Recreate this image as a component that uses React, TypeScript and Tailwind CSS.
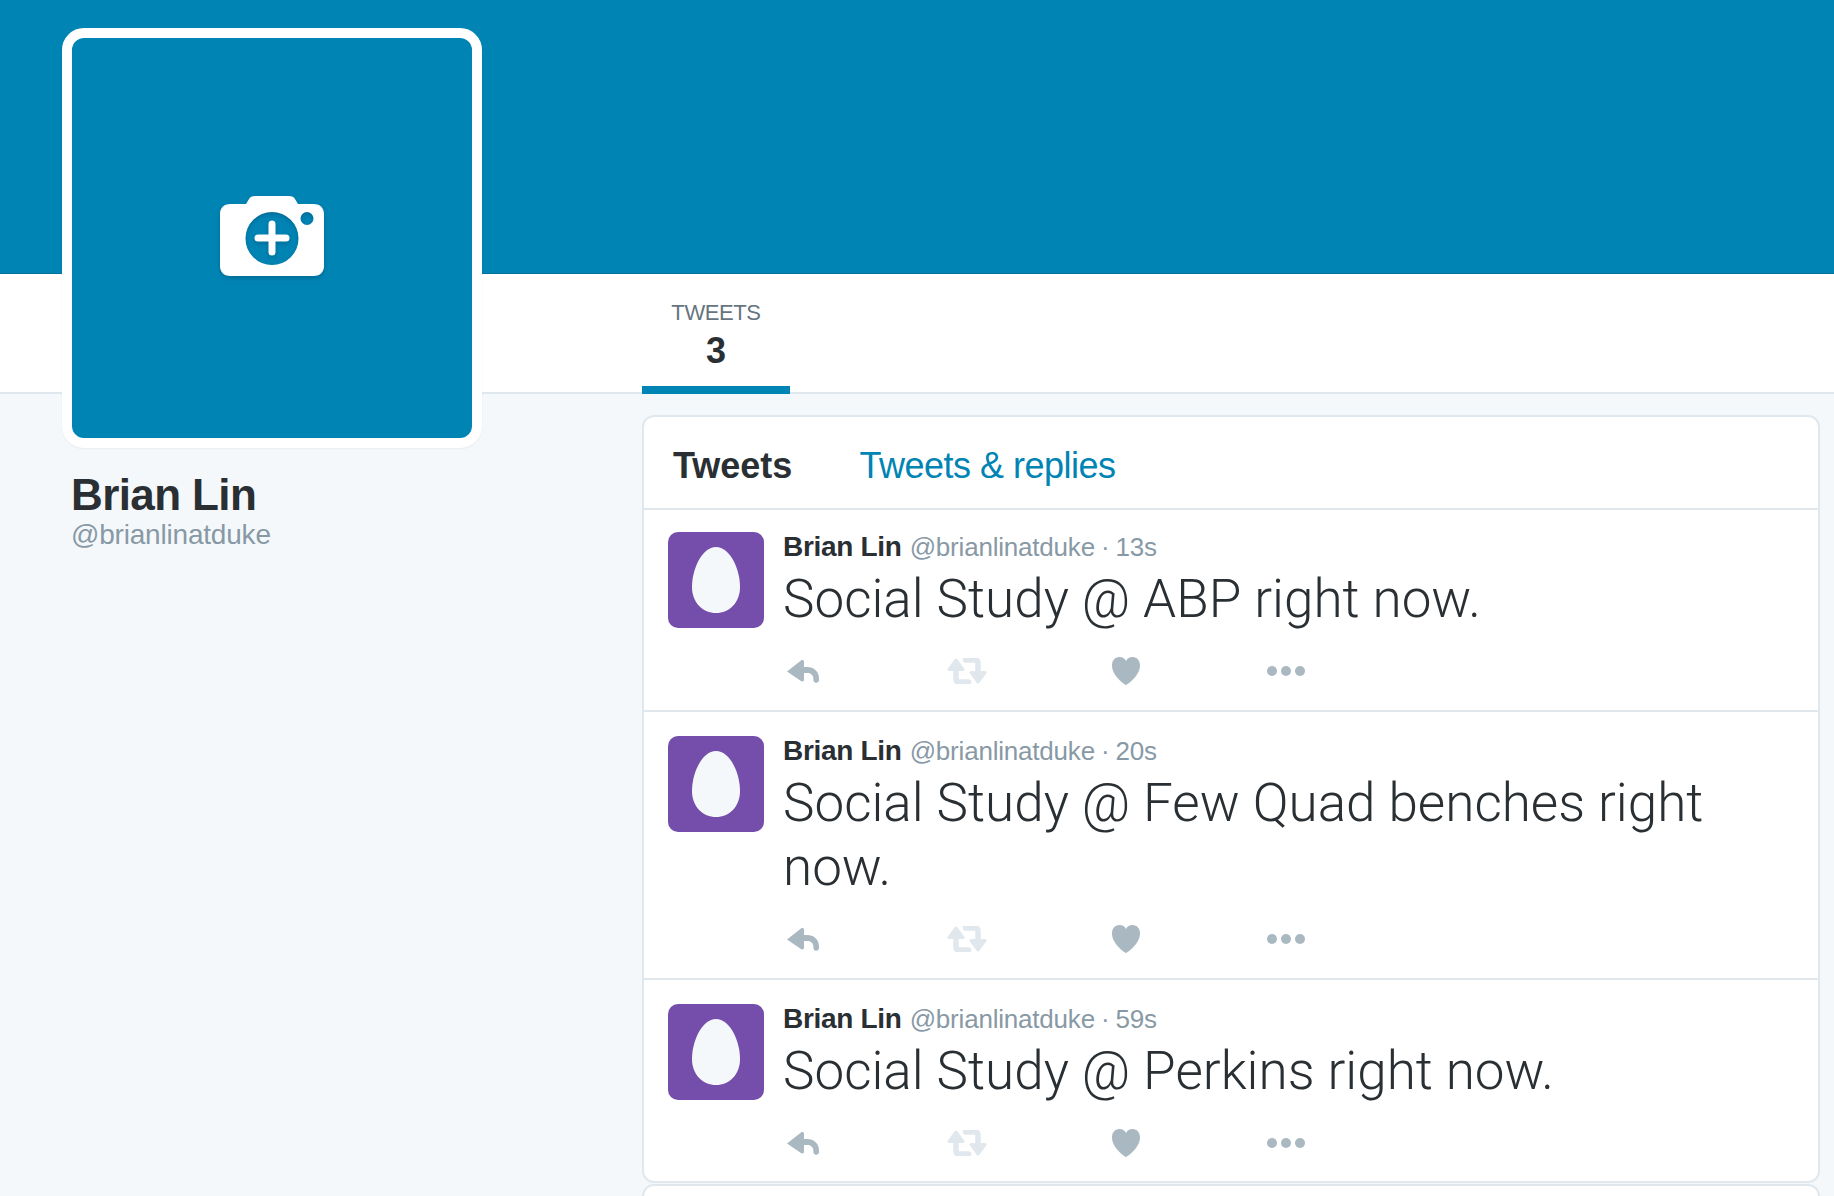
import React from "react";

const TWEETS = [
  { time: "13s", text: "Social Study @ ABP right now.", pad: "pt-[22px] pb-[25px]" },
  { time: "20s", text: "Social Study @ Few Quad benches right now.", pad: "pt-[24px] pb-[25px]" },
  { time: "59s", text: "Social Study @ Perkins right now.", pad: "pt-[24px] pb-[24px]" },
];

const CameraPlus = () => (
  <svg width="120" height="100" viewBox="0 0 120 100" className="drop-shadow-[0_2px_2px_rgba(0,60,90,0.35)]">
    <path
      fillRule="evenodd"
      fill="#fff"
      d="M18 14h16l3-5c1-2 3-3 6-3h34c3 0 5 1 6 3l3 5h16c6 0 10 4 10 10v52c0 6-4 10-10 10H18c-6 0-10-4-10-10V24c0-6 4-10 10-10zM60 22a26.500 26.500 0 1 0 0 53 26.500 26.500 0 0 0 0-53zM95 22a6.500 6.500 0 1 0 0 13 6.500 6.500 0 0 0 0-13z"
    />
    <path d="M60 34v28M46 48h28" stroke="#fff" strokeWidth="7" strokeLinecap="round" />
  </svg>
);

const Egg = () => (
  <svg width="48" height="66" viewBox="0 0 48 66">
    <path d="M24 0C38 0 48 22 48 40C48 56 37 66 24 66C11 66 0 56 0 40C0 22 10 0 24 0Z" fill="#f5f8fa" />
  </svg>
);

const Reply = () => (
  <svg width="32" height="24" viewBox="0 0 32 24" fill="#aab8c2">
    <path d="M0 12.500 14 1.500c1.200-1 3-.4 3 1.300V8h3c7 0 12 4.500 12 11.500v1.500c0 1.600-1.200 2.800-2.800 2.800s-2.800-1.200-2.800-2.800v-1.500c0-3.500-2.800-5.500-6.400-5.500h-3v6.700c0 1.700-1.800 2.300-3 1.300L0 12.500z" />
  </svg>
);

const Retweet = () => (
  <svg width="40" height="26" viewBox="0 0 40 26" fill="none" stroke="#e1e8ed" strokeLinecap="round" strokeLinejoin="round">
    <path d="M9 2 2 11.500h14L9 2z" fill="#e1e8ed" strokeWidth="3" />
    <path d="M9 9v12.500c0 1.500 1 2.500 2.500 2.500h10" strokeWidth="5.500" />
    <path d="M31 24l7-9.500H24L31 24z" fill="#e1e8ed" strokeWidth="3" />
    <path d="M31 17V4.500C31 3 30 2 28.500 2h-10" strokeWidth="5.500" />
  </svg>
);

const Heart = () => (
  <svg width="28" height="28" viewBox="0 0 28 28" fill="#aab8c2">
    <path d="M14 28C11 26.500 0 18 0 8.500 0 3.500 3 0 7.500 0 10.500 0 12.800 1.600 14 4 15.200 1.600 17.500 0 20.500 0 25 0 28 3.500 28 8.500 28 18 17 26.500 14 28Z" />
  </svg>
);

const Dots = () => (
  <svg width="38" height="10" viewBox="0 0 38 10" fill="#aab8c2">
    <circle cx="5" cy="5" r="5" />
    <circle cx="19" cy="5" r="5" />
    <circle cx="33" cy="5" r="5" />
  </svg>
);

const TweetRow = ({ time, text, pad }: { time: string; text: string; pad: string }) => (
  <div className={`flex border-b-2 border-[#e1e8ed] pl-[24px] pr-[24px] last:border-b-0 ${pad}`}>
    <div className="flex h-[96px] w-[96px] shrink-0 items-center justify-center rounded-[10px] bg-[#744eaa]">
      <Egg />
    </div>
    <div className="ml-[19px] min-w-0 flex-1">
      <div className="mt-[2px] flex h-[26px] items-center whitespace-nowrap text-[26px] leading-[26px] tracking-[-0.2px] text-[#8899a6]">
        <span className="mr-[8px] text-[28px] font-bold tracking-[-0.3px] text-[#292f33]">Brian Lin</span>
        <span>@brianlinatduke</span>
        <span className="mx-[6px]">·</span>
        <span>{time}</span>
      </div>
      <p className="mt-[7px] font-['Roboto',sans-serif] text-[53px] leading-[64px] font-light text-[#292f33]">{text}</p>
      <div className="mt-[26px] flex h-[28px] items-center">
        <div className="w-[160px] pl-[4px]"><Reply /></div>
        <div className="w-[169px] pl-[4px]"><Retweet /></div>
        <div className="w-[155px]"><Heart /></div>
        <div><Dots /></div>
      </div>
    </div>
  </div>
);

export default function App() {
  return (
    <div className="relative h-[1196px] w-full overflow-hidden bg-[#f5f8fa] font-['Liberation_Sans',Arial,sans-serif]">
      <div className="h-[274px] border-b border-[#00709a] bg-[#0084b4]" />

      <div className="h-[120px] border-b-2 border-[#e1e8ed] bg-white pl-[642px]">
        <div className="flex h-[120px] w-[148px] flex-col items-center border-b-[8px] border-[#0084b4] pt-[26px]">
          <span className="text-[22px] leading-[26px] tracking-[-0.4px] text-[#66757f]">TWEETS</span>
          <span className="mt-[6px] text-[36px] leading-[38px] font-bold text-[#292f33]">3</span>
        </div>
      </div>

      <div className="absolute top-[28px] left-[62px] flex h-[420px] w-[420px] items-center justify-center rounded-[22px] border-[10px] border-white bg-[#0084b4] shadow-[0_1px_2px_rgba(0,0,0,0.05)]">
        <div className="mr-[1px] mb-[-4px]"><CameraPlus /></div>
      </div>

      <div className="flex">
        <div className="w-[642px] shrink-0 pt-[76px] pl-[71px]">
          <h1 className="text-[44px] leading-[50px] font-bold tracking-[-0.6px] text-[#292f33]">Brian Lin</h1>
          <p className="text-[28px] leading-[30px] tracking-[-0.2px] text-[#8899a6]">@brianlinatduke</p>
        </div>

        <div className="w-[1178px] shrink-0 pt-[21px]">
          <div className="rounded-[12px] border-2 border-[#e1e8ed] bg-white">
            <div className="flex h-[93px] items-center border-b-2 border-[#e1e8ed] pt-[6px] pl-[29px] text-[36px]">
              <span className="mr-[67px] font-bold text-[#292f33]">Tweets</span>
              <span className="tracking-[-0.5px] text-[#0084b4]">Tweets &amp; replies</span>
            </div>
            {TWEETS.map((t) => (
              <TweetRow key={t.time} time={t.time} text={t.text} pad={t.pad} />
            ))}
          </div>
          <div className="mt-[1px] h-[40px] rounded-t-[12px] border-x-2 border-t-2 border-[#e1e8ed] bg-white" />
        </div>
      </div>
    </div>
  );
}
